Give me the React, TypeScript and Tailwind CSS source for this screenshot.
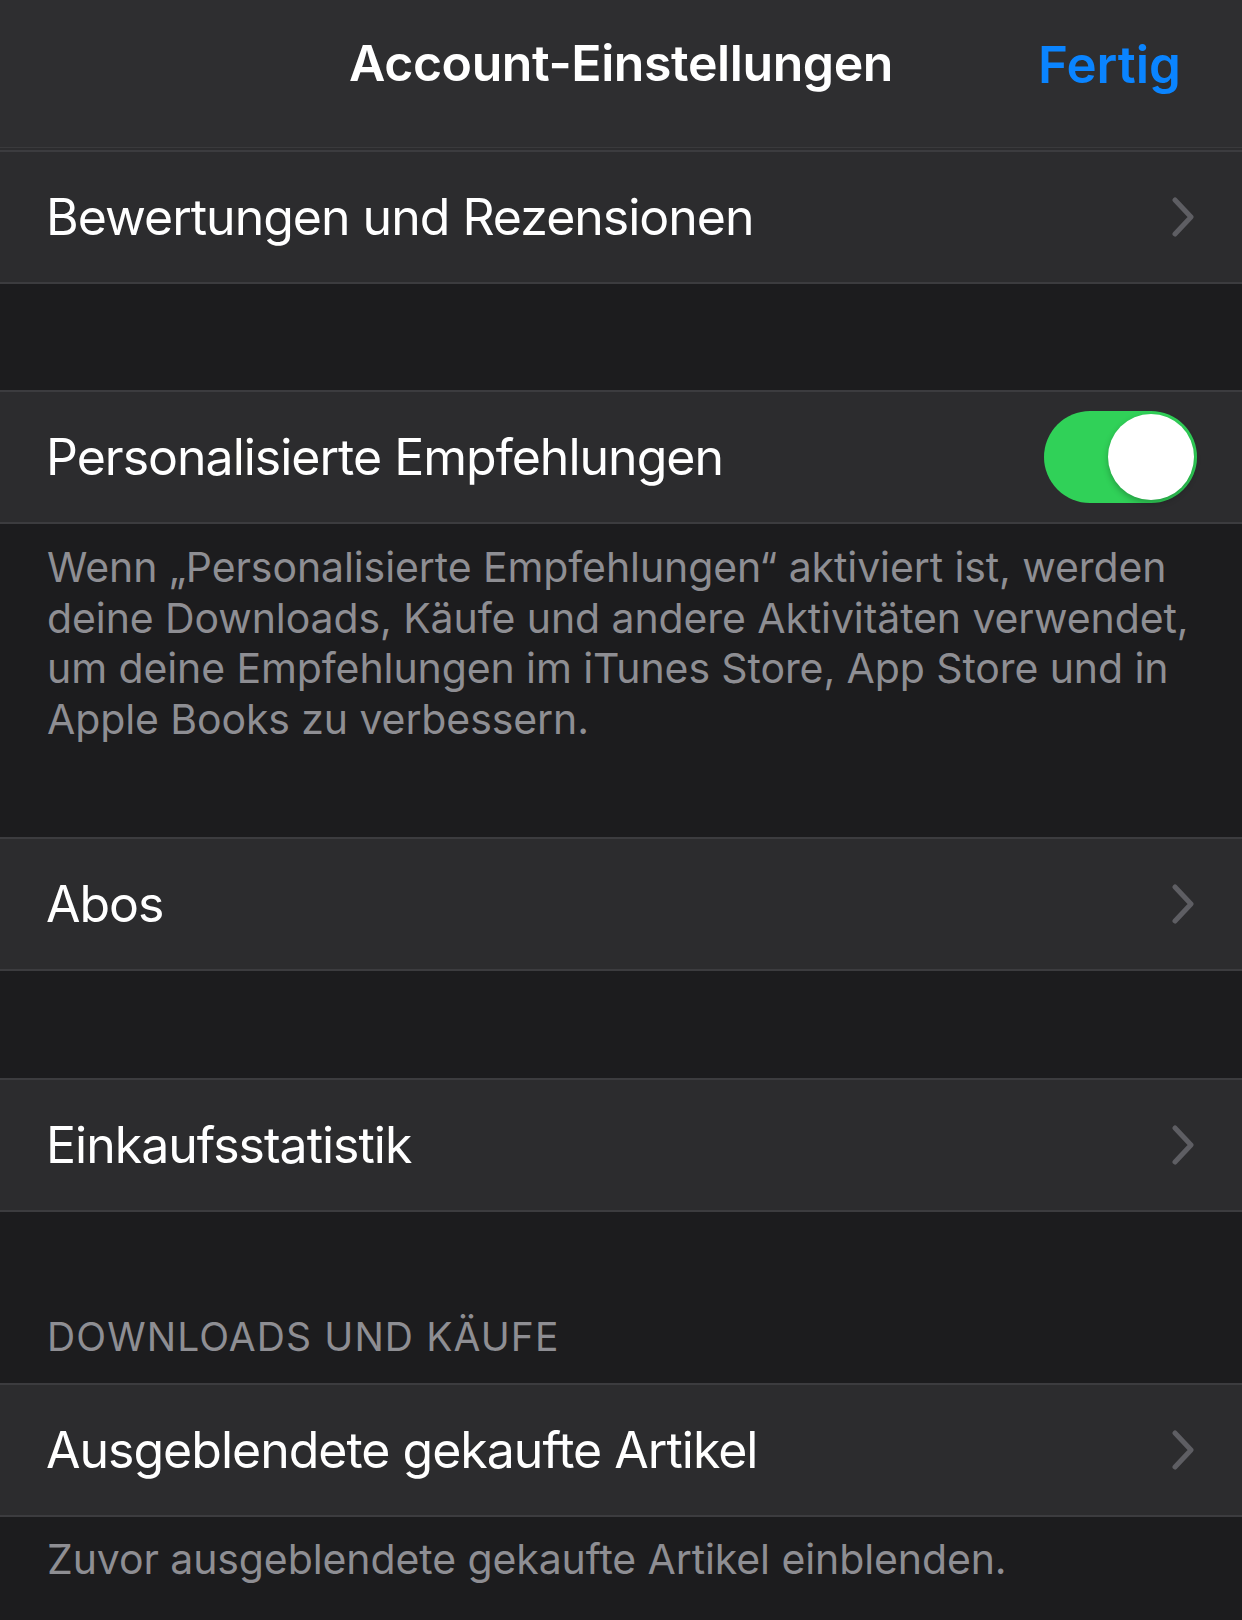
import React from "react";

const font = { fontFamily: "Inter, 'Noto Sans', 'Liberation Sans', sans-serif" };

function Chevron() {
  return (
    <svg width="24" height="40" viewBox="0 0 24 40" className="mr-[1px] shrink-0">
      <path d="M4 3 L20 20 L4 37" fill="none" stroke="#5e5e63" strokeWidth="5" strokeLinecap="round" strokeLinejoin="round" />
    </svg>
  );
}

function Row({ label, right }: { label: string; right?: React.ReactNode }) {
  return (
    <div className="flex h-[134px] items-center justify-between border-y-2 border-[#3c3c3f] bg-[#2c2c2e] pl-[46px] pr-[46px]">
      <span className="text-[50px] tracking-[-1px] text-white">{label}</span>
      {right ?? <Chevron />}
    </div>
  );
}

function Toggle() {
  return (
    <div className="relative mr-[-1px] h-[92px] w-[153px] rounded-full bg-[#30d158]">
      <div className="absolute right-[3px] top-[3px] h-[86px] w-[86px] rounded-full bg-white shadow-[0_3px_6px_rgba(0,0,0,0.25)]" />
    </div>
  );
}

export default function App() {
  return (
    <div className="h-[1620px] w-[1242px] overflow-hidden bg-[#1c1c1e]" style={font}>
      <div className="relative flex h-[148px] items-center justify-center border-b border-[#3a3a3c] bg-[#2e2e30]">
        <span className="pb-[20px] text-[50px] font-semibold tracking-[-0.4px] text-white">Account-Einstellungen</span>
        <span className="absolute right-[61px] top-[27px] text-[51px] font-semibold tracking-[0px] text-[#0a84ff]">Fertig</span>
      </div>
      <div className="h-[2px] bg-[#2c2c2e]" />
      <Row label="Bewertungen und Rezensionen" />
      <div className="h-[106px]" />
      <Row label="Personalisierte Empfehlungen" right={<Toggle />} />
      <div className="h-[313px] px-[47px] pt-[18px]">
        <p className="text-[41px] leading-[50.5px] tracking-[-0.1px] text-[#8e8e93]">
          Wenn „Personalisierte Empfehlungen“ aktiviert ist, werden
          <br />
          deine Downloads, Käufe und andere Aktivitäten verwendet,
          <br />
          um deine Empfehlungen im iTunes Store, App Store und in
          <br />
          Apple Books zu verbessern.
        </p>
      </div>
      <Row label="Abos" />
      <div className="h-[107px]" />
      <Row label="Einkaufsstatistik" />
      <div className="flex h-[171px] items-end px-[47px] pb-[22px]">
        <span className="text-[39px] leading-[48px] tracking-[1.1px] text-[#8e8e93]">DOWNLOADS UND KÄUFE</span>
      </div>
      <Row label="Ausgeblendete gekaufte Artikel" />
      <div className="px-[47px] pt-[17px]">
        <p className="text-[41px] leading-[50.5px] tracking-[-0.1px] text-[#8e8e93]">
          Zuvor ausgeblendete gekaufte Artikel einblenden.
        </p>
      </div>
    </div>
  );
}
